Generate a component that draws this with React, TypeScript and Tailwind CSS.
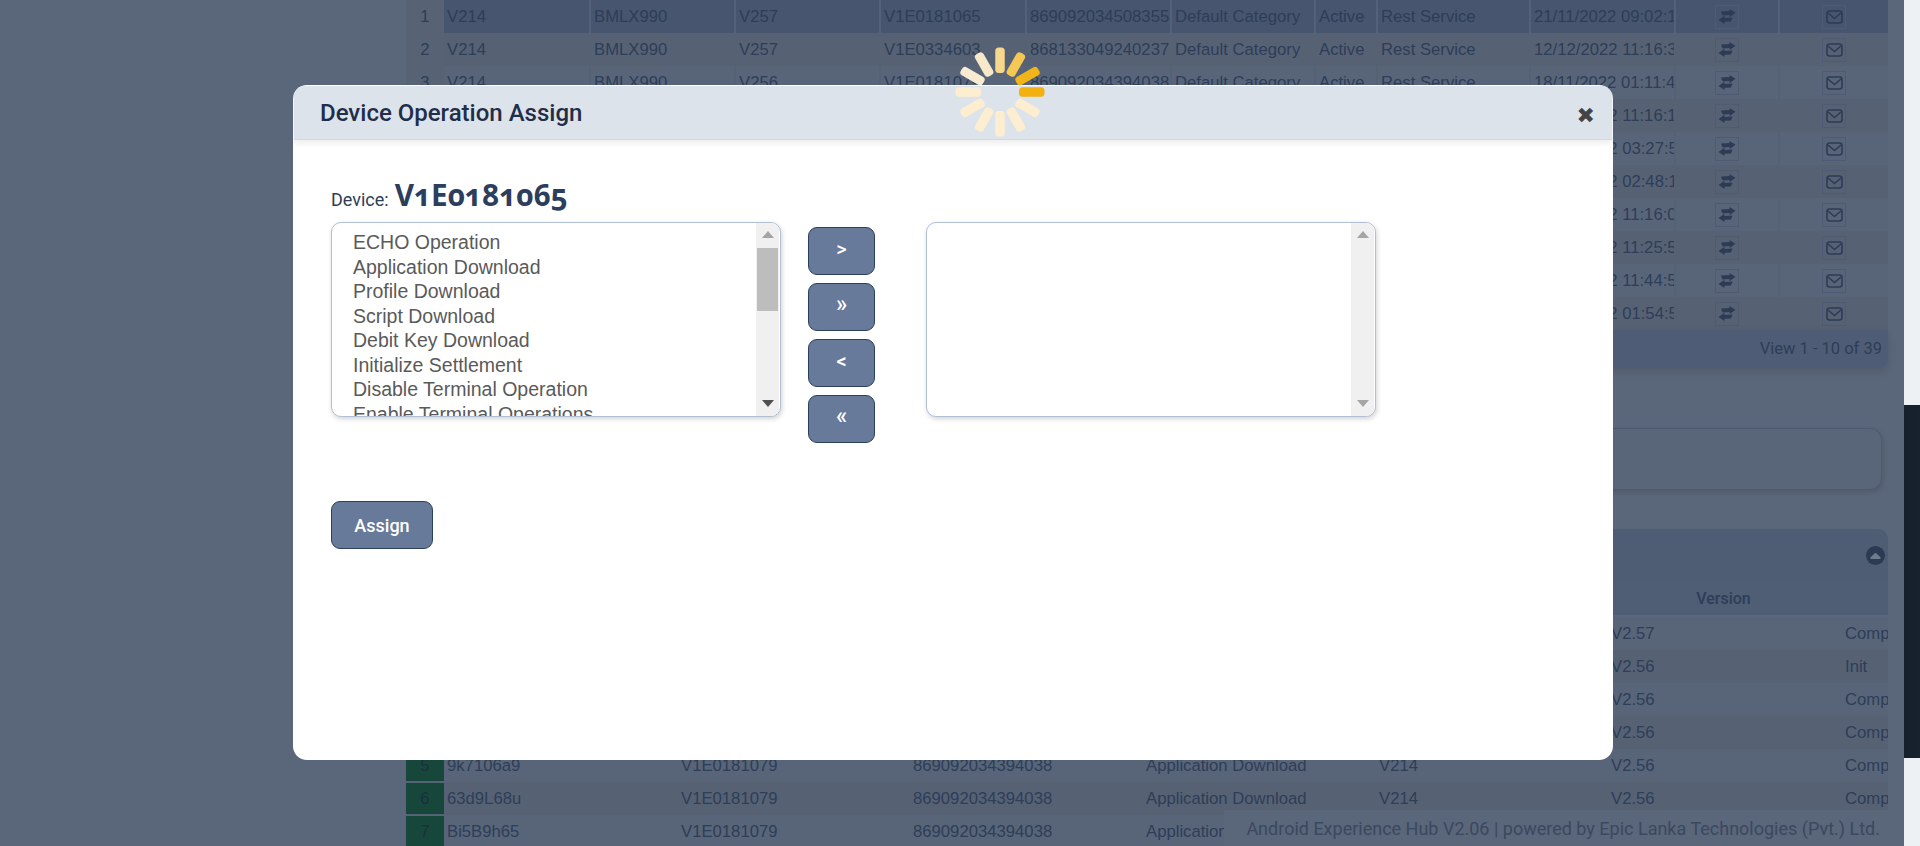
const topRows = [
  ["V214", "BMLX990", "V257", "V1E0181065", "869092034508355", "Default Category", "Active", "Rest Service", "21/11/2022 09:02:16"],
  ["V214", "BMLX990", "V257", "V1E0334603", "868133049240237", "Default Category", "Active", "Rest Service", "12/12/2022 11:16:34"],
  ["V214", "BMLX990", "V256", "V1E0181079", "869092034394038", "Default Category", "Active", "Rest Service", "18/11/2022 01:11:45"],
  ["V214", "BMLX990", "V257", "V1E0181066", "869092034508363", "Default Category", "Active", "Rest Service", "12/12/2022 11:16:12"],
  ["V214", "BMLX990", "V257", "V1E0181067", "869092034508371", "Default Category", "Active", "Rest Service", "14/12/2022 03:27:54"],
  ["V214", "BMLX990", "V257", "V1E0181068", "869092034508389", "Default Category", "Active", "Rest Service", "14/12/2022 02:48:19"],
  ["V214", "BMLX990", "V257", "V1E0181069", "869092034508397", "Default Category", "Active", "Rest Service", "12/12/2022 11:16:07"],
  ["V214", "BMLX990", "V257", "V1E0181070", "869092034508405", "Default Category", "Active", "Rest Service", "12/12/2022 11:25:51"],
  ["V214", "BMLX990", "V257", "V1E0181071", "869092034508413", "Default Category", "Active", "Rest Service", "12/12/2022 11:44:58"],
  ["V214", "BMLX990", "V257", "V1E0181072", "869092034508421", "Default Category", "Active", "Rest Service", "14/12/2022 01:54:53"],
];

const lowerRows = [
  ["7a1c03b2", "V2.57", "Completed"],
  ["4f8e21d7", "V2.56", "Init"],
  ["2h6K90c3", "V2.56", "Completed"],
  ["8m3P47e1", "V2.56", "Completed"],
  ["9k7106a9", "V2.56", "Completed"],
  ["63d9L68u", "V2.56", "Completed"],
  ["Bi5B9h65", "V2.56", "Completed"],
];

const operations = [
  "ECHO Operation",
  "Application Download",
  "Profile Download",
  "Script Download",
  "Debit Key Download",
  "Initialize Settlement",
  "Disable Terminal Operation",
  "Enable Terminal Operations",
];

const spinnerColors = ["#f2b10f", "#fdeed2", "#fdeed2", "#fdeed2", "#fdeed2", "#fdeed2", "#fdeed2", "#f7ecd2", "#f6e8c8", "#f7d78c", "#f5c856", "#f2b519"];

function Triangle({ up, color }: { up?: boolean; color: string }) {
  return (
    <svg width="12" height="7" viewBox="0 0 12 7">
      <path d={up ? "M6 0 L12 7 L0 7 Z" : "M0 0 L12 0 L6 7 Z"} fill={color} />
    </svg>
  );
}

function ExchangeIcon() {
  return (
    <svg width="18" height="15" viewBox="0 0 18 15" fill="#2d3b55">
      <path d="M3 2.4 L11.5 2 L11.5 0 L17.5 3.8 L11.5 8.2 L11.5 6 L4.5 6.4 Z" />
      <path d="M14.5 8.6 L6.5 9 L6.5 6.8 L0.5 11 L6.5 15 L6.5 12.8 L13 12.4 Z" />
    </svg>
  );
}

function MailIcon() {
  return (
    <svg width="17" height="14" viewBox="0 0 17 14" fill="none" stroke="#2d3b55" strokeWidth="1.6">
      <rect x="1" y="1" width="15" height="12" rx="2.5" />
      <path d="M2 3 L8.5 8.5 L15 3" />
    </svg>
  );
}

function ListBox({ items, thumb, downColor }: { items: string[]; thumb?: boolean; downColor: string }) {
  return (
    <div className="flex h-[195px] w-[450px] overflow-hidden rounded-[10px] border border-[#b2c0d6] bg-white shadow-[1px_2px_5px_rgba(0,0,0,0.18)]">
      <div className="min-w-0 flex-1 overflow-hidden pl-[21px] pt-[7px] font-['Liberation_Sans',sans-serif] text-[19.5px] leading-[24.5px] whitespace-nowrap text-[#5a5a5a]">
        {items.map((t) => (
          <div key={t}>{t}</div>
        ))}
      </div>
      <div className="mr-px flex w-[23px] shrink-0 flex-col items-center bg-[#f0f0f0]">
        <div className="flex h-[25px] w-full items-start justify-center pt-[8px]">
          <Triangle up color="#a5a5a5" />
        </div>
        {thumb && <div className="h-[63px] w-[21px] bg-[#bdbdbd]" />}
        <div className="flex-1" />
        <div className="flex h-[25px] w-full items-end justify-center pb-[9px]">
          <Triangle color={downColor} />
        </div>
      </div>
    </div>
  );
}

function MoveButton({ label, big }: { label: string; big?: boolean }) {
  return (
    <button
      className={`flex h-[48px] w-[67px] items-center justify-center rounded-[9px] border border-[#2b3f5e] bg-[#677a9a] pb-[4px] font-['Roboto',sans-serif] font-medium text-white ${
        big ? "text-[23px]" : "text-[20px]"
      }`}
    >
      {label}
    </button>
  );
}

function Spinner() {
  return (
    <svg width="100" height="100" viewBox="-50 -50 100 100" className="absolute left-[950px] top-[42px]">
      {spinnerColors.map((c, i) => (
        <rect key={i} x="19" y="-4.75" width="25.5" height="9.5" rx="3.5" fill={c} transform={`rotate(${i * 30})`} />
      ))}
    </svg>
  );
}

export default function App() {
  return (
    <div className="relative flex h-[846px] w-[1920px] overflow-hidden bg-[#5a6679] font-['Liberation_Sans',sans-serif]">
      <main className="w-[1904px] shrink-0 bg-[#5a6679] pl-[406px] pr-[16px] text-[16.7px] text-[#2e3d58]">
        {/* device table */}
        <table className="w-full table-fixed border-separate border-spacing-0 bg-[#576375]">
          <colgroup>
            <col className="w-[38px]" />
            <col className="w-[147px]" />
            <col className="w-[145px]" />
            <col className="w-[145px]" />
            <col className="w-[146px]" />
            <col className="w-[145px]" />
            <col className="w-[144px]" />
            <col className="w-[62px]" />
            <col className="w-[153px]" />
            <col className="w-[145px]" />
            <col className="w-[104px]" />
            <col className="w-[108px]" />
          </colgroup>
          <tbody>
            {topRows.map((row, r) => {
              const rowBg = r === 0 ? "bg-[#47566e]" : r % 2 === 0 ? "bg-[#586578]" : "bg-[#566274]";
              const sep = r === 0 ? "border-[#53617a]" : r % 2 === 0 ? "border-[#556175]" : "border-[#566274]";
              return (
                <tr key={r} className="h-[33px]">
                  <td className="bg-[#576375] text-center">{r + 1}</td>
                  {row.map((c, i) => (
                    <td key={i} className={`overflow-hidden border-r-2 ${sep} ${rowBg} pl-[3px] whitespace-nowrap`}>
                      {c}
                    </td>
                  ))}
                  <td className={`border-r-2 ${sep} ${rowBg}`}>
                    <span className="mx-auto flex h-[24px] w-[24px] items-center justify-center border border-[#4e5b72]">
                      <ExchangeIcon />
                    </span>
                  </td>
                  <td className={rowBg}>
                    <span className="mx-auto flex h-[24px] w-[24px] items-center justify-center border border-[#4e5b72]">
                      <MailIcon />
                    </span>
                  </td>
                </tr>
              );
            })}
          </tbody>
        </table>

        {/* pager */}
        <div className="flex h-[38px] items-center justify-end rounded-b-[8px] bg-[#4e5d75] pr-[6px] font-['Roboto',sans-serif] text-[16.5px] text-[#2e3d58] shadow-[0_3px_8px_rgba(0,0,0,0.1)]">
          View 1 - 10 of 39
        </div>

        {/* search panel */}
        <div className="ml-auto mt-[60px] mr-[6px] h-[62px] rounded-[12px] border border-[#4d5a71] bg-[#596578] shadow-[1px_2px_5px_rgba(0,0,0,0.12)]" />

        {/* lower panel */}
        <div className="mt-[39px] flex h-[53px] items-center justify-end rounded-t-[10px] bg-[#4e5c74] pr-[3px]">
          <span className="flex h-[19px] w-[19px] items-center justify-center rounded-full bg-[#2c3a54]">
            <svg width="11" height="6" viewBox="0 0 11 6">
              <path d="M5.5 0 Q6 0 6.5 0.6 L10.6 4.6 Q11 6 9.8 6 L1.2 6 Q0 6 0.4 4.6 L4.5 0.6 Q5 0 5.5 0 Z" fill="#6f7b8e" />
            </svg>
          </span>
        </div>
        <div className="grid h-[33px] grid-cols-[1206px_1fr_53px] items-center bg-[#4f5d75] font-['Roboto',sans-serif] text-[16px] font-medium">
          <span />
          <span className="text-center">Version</span>
          <span />
        </div>
        <div className="pt-[2px]">
          {lowerRows.map((row, r) => (
            <div
              key={r}
              className={`grid h-[33px] grid-cols-[38px_234px_232px_233px_233px_232px_234px_1fr] items-center overflow-hidden whitespace-nowrap ${
                r % 2 === 0 ? "bg-[#586578]" : "bg-[#566274]"
              }`}
            >
              <span className="flex h-[31px] items-center justify-center bg-[#17473a] text-[#1a2f40]">{r + 1}</span>
              <span className="pl-[3px]">{row[0]}</span>
              <span className="pl-[3px]">V1E0181079</span>
              <span className="pl-[3px]">869092034394038</span>
              <span className="pl-[3px]">Application Download</span>
              <span className="pl-[3px]">V214</span>
              <span className="pl-[3px]">{row[1]}</span>
              <span className="overflow-hidden pl-[3px]">{row[2]}</span>
            </div>
          ))}
        </div>
      </main>

      {/* sliver of the page beside the overlay */}
      <aside className="flex w-4 shrink-0 flex-col bg-[#eef1f3]">
        <div className="h-[405px]" />
        <div className="h-[353px] bg-gradient-to-r from-[#16202b] to-[#18222e]" />
      </aside>

      {/* footer */}
      <div className="absolute left-[1224px] top-[810px] flex h-[36px] w-[680px] items-center justify-end bg-[#5a6679] pr-[24px] font-['Roboto',sans-serif] text-[18px] whitespace-nowrap text-[#3a4861]">
        Android Experience Hub V2.06 | powered by Epic Lanka Technologies (Pvt.) Ltd.
      </div>

      {/* modal */}
      <div className="absolute left-[293px] top-[85px] h-[675px] w-[1320px] overflow-hidden rounded-[14px] bg-white">
        <header className="relative mx-[1px] mt-[1px] flex h-[54px] items-center justify-between border-b border-[#d6d9dd] bg-[#dde3ea] pl-[26px] pr-[17px] shadow-[0_3px_6px_rgba(0,0,0,0.08)]">
          <h2 className="font-['Roboto',sans-serif] text-[24px] font-medium text-[#1f2e49]">Device Operation Assign</h2>
          <span className="mt-[6px] font-['DejaVu_Sans',sans-serif] text-[22px] font-bold text-[#444444]">✖</span>
        </header>
        <div className="pl-[38px] pt-[33px]">
          <div className="flex h-[49px] items-baseline gap-[6px]">
            <span className="font-['Roboto',sans-serif] text-[18px] text-[#2e3d58]">Device:</span>
            <span className="font-['Open_Sans',sans-serif] text-[29.7px] font-bold oldstyle-nums text-[#2c3e5e]">V1E0181065</span>
          </div>
          <div className="flex items-start">
            <ListBox items={operations} thumb downColor="#505050" />
            <div className="ml-[27px] mt-[5px] flex flex-col gap-[8px]">
              <MoveButton label=">" />
              <MoveButton label="»" big />
              <MoveButton label="<" />
              <MoveButton label="«" big />
            </div>
            <div className="ml-[51px]">
              <ListBox items={[]} downColor="#a5a5a5" />
            </div>
          </div>
          <button className="mt-[58px] flex h-[48px] w-[102px] items-center justify-center rounded-[9px] border border-[#2b3f5e] bg-[#677a9a] font-['Roboto',sans-serif] text-[18px] font-medium text-white">
            Assign
          </button>
        </div>
      </div>

      <Spinner />
    </div>
  );
}
